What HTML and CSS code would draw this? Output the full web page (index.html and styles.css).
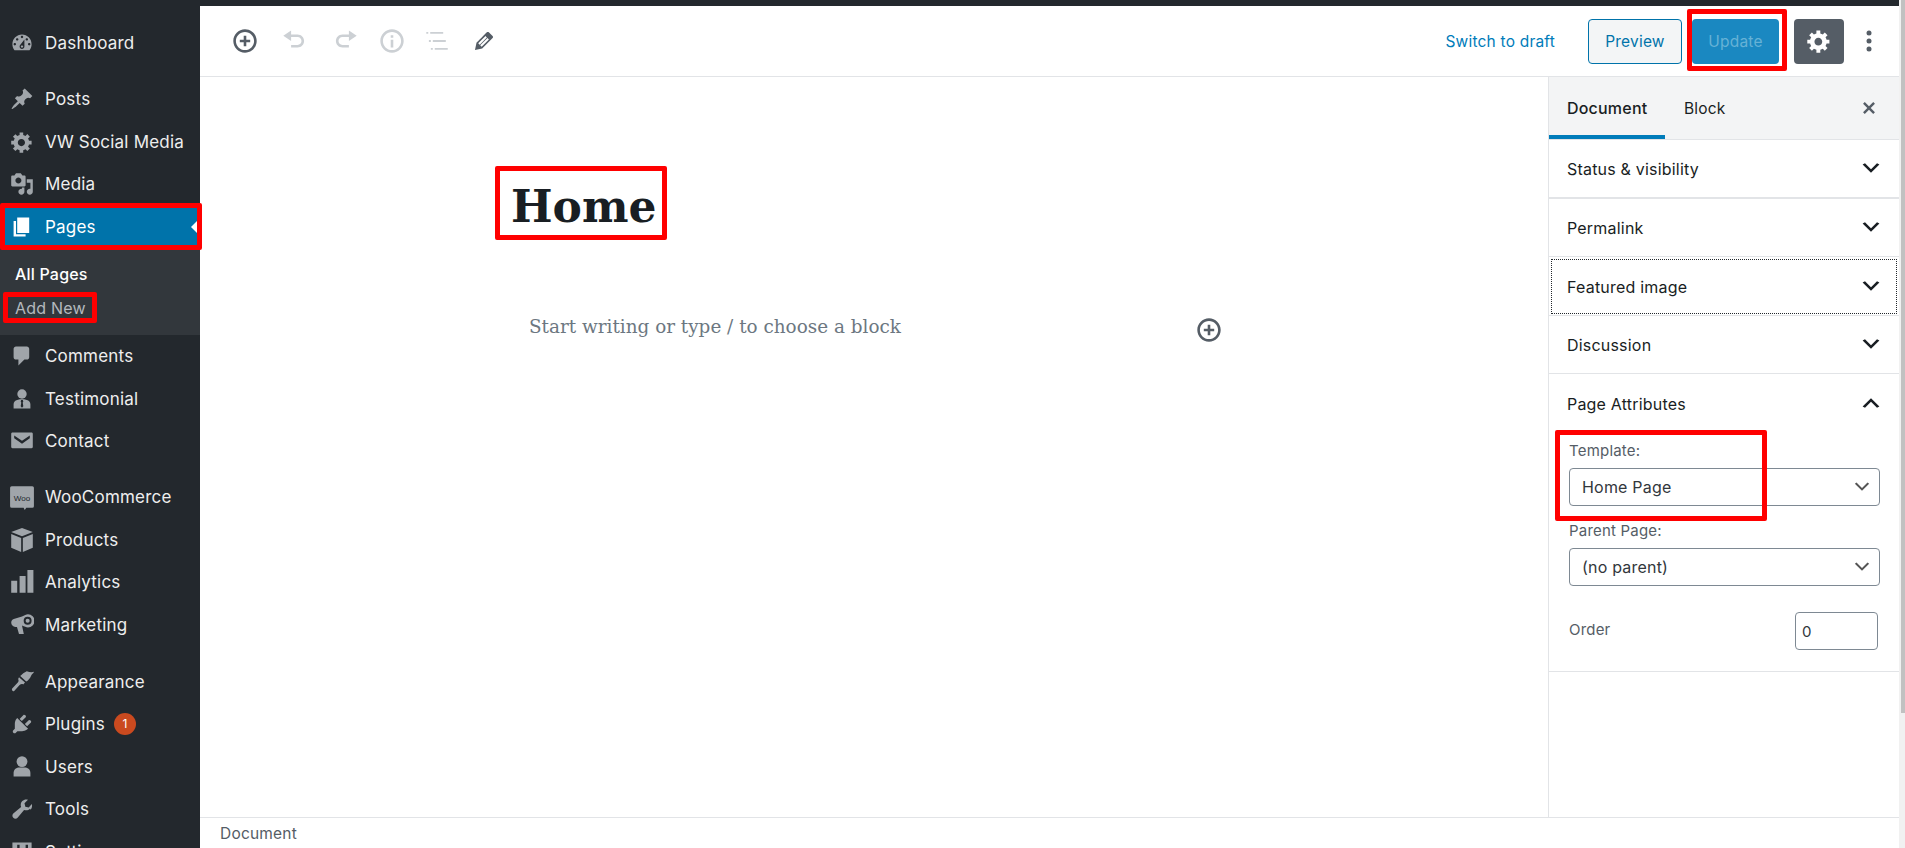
FILE: index.html
```html
<!DOCTYPE html>
<html lang="en">
<head>
    <meta charset="UTF-8">
    <title>Edit Page</title>
    <link rel="stylesheet" href="styles.css">
</head>
<body>
    <div class="admin">
        <nav class="sidebar">
            <a class="menu-item"><svg class="menu-icon" viewBox="0 0 20 20"><path d="M3.76 16h12.48c1.1-1.37 1.76-3.11 1.76-5 0-4.42-3.58-8-8-8s-8 3.58-8 8c0 1.89.66 3.63 1.76 5zM10 4c.55 0 1 .45 1 1s-.45 1-1 1-1-.45-1-1 .45-1 1-1zM6 6c.55 0 1 .45 1 1s-.45 1-1 1-1-.45-1-1 .45-1 1-1zm8 0c.55 0 1 .45 1 1s-.45 1-1 1-1-.45-1-1 .45-1 1-1zm-5.37 5.55L12 7v6c0 1.1-.9 2-2 2s-2-.9-2-2c0-.57.24-1.08.63-1.45zM4 10c.55 0 1 .45 1 1s-.45 1-1 1-1-.45-1-1 .45-1 1-1zm12 0c.55 0 1 .45 1 1s-.45 1-1 1-1-.45-1-1 .45-1 1-1zm-5 3c0-.55-.45-1-1-1s-1 .45-1 1 .45 1 1 1 1-.45 1-1z"/></svg>Dashboard</a>
            <div class="menu-sep"></div>
            <a class="menu-item"><svg class="menu-icon" viewBox="0 0 20 20"><path d="M10.44 3.02l1.82-1.82 6.36 6.35-1.83 1.82c-1.05-.68-2.48-.57-3.41.36l-.75.75c-.92.93-1.04 2.35-.35 3.41l-1.83 1.82-2.41-2.41-2.8 2.79c-.42.42-3.38 2.71-3.8 2.29s1.86-3.39 2.28-3.81l2.79-2.79L4.1 9.36l1.83-1.82c1.05.69 2.48.57 3.4-.36l.75-.75c.93-.92 1.05-2.35.36-3.41z"/></svg>Posts</a>
            <a class="menu-item"><svg class="menu-icon" viewBox="0 0 20 20"><path d="M18 12h-2.18c-.17.7-.44 1.35-.81 1.93l1.54 1.54-2.1 2.1-1.54-1.54c-.58.36-1.23.63-1.91.79V19H8v-2.18c-.68-.16-1.33-.43-1.91-.79l-1.54 1.54-2.12-2.12 1.54-1.54c-.36-.58-.63-1.23-.79-1.91H1V9.03h2.17c.16-.7.44-1.35.8-1.94L2.43 5.55l2.1-2.1 1.54 1.54c.58-.37 1.24-.64 1.93-.81V2h3v2.18c.68.16 1.33.43 1.91.79l1.54-1.54 2.12 2.12-1.54 1.54c.36.59.64 1.24.8 1.94H18V12zm-8.5 1.5c1.66 0 3-1.34 3-3s-1.34-3-3-3-3 1.34-3 3 1.34 3 3 3z"/></svg>VW Social Media</a>
            <a class="menu-item"><svg class="menu-icon" viewBox="0 0 20 20"><path d="M13 11V4c0-.55-.45-1-1-1h-1.67L9 1H5L3.67 3H2c-.55 0-1 .45-1 1v7c0 .55.45 1 1 1h10c.55 0 1-.45 1-1zM7 4.5c1.38 0 2.5 1.12 2.5 2.5S8.38 9.5 7 9.5 4.5 8.38 4.5 7 5.62 4.5 7 4.5zM14 6h5v10.5c0 1.38-1.12 2.5-2.5 2.5S14 17.88 14 16.5s1.12-2.5 2.5-2.5c.17 0 .34.02.5.05V9h-3V6zm-4 8.05V13h2v3.5c0 1.38-1.12 2.5-2.5 2.5S7 17.88 7 16.5 8.12 14 9.5 14c.17 0 .34.02.5.05z"/></svg>Media</a>
            <a class="menu-item current"><svg class="menu-icon" viewBox="0 0 20 20"><path d="M6 15V2h10v13H6zm-1 1h8v2H3V5h2v11z"/></svg>Pages</a>
            <div class="submenu">
                <a class="sub-item active">All Pages</a>
                <a class="sub-item">Add New</a>
            </div>
            <a class="menu-item"><svg class="menu-icon" viewBox="0 0 20 20"><path d="M5 2h9c1.1 0 2 .9 2 2v7c0 1.1-.9 2-2 2h-2l-5 5v-5H5c-1.1 0-2-.9-2-2V4c0-1.1.9-2 2-2z"/></svg>Comments</a>
            <a class="menu-item"><svg class="menu-icon" viewBox="0 0 20 20"><circle cx="10" cy="5.8" r="3.9"/><path d="M3 18v-3.6c0-2 1.3-3.2 3-3.6l2.2-.6h3.6l2.2.6c1.7.4 3 1.6 3 3.6V18z"/><path class="cut" d="M9.3 10.8h1.4l.4 1.2-.5 1 .5 3-1.1 1.2L8.900 16l.5-3-.5-1z"/></svg>Testimonial</a>
            <a class="menu-item"><svg class="menu-icon" viewBox="0 0 20 20"><path d="M2 3h16c.5 0 1 .5 1 1v11c0 .5-.5 1-1 1H2c-.5 0-1-.5-1-1V4c0-.5.5-1 1-1z"/><path class="cut" d="M3.500 5.500L10 9.800l6.500-4.300v2.300L10 12.200 3.500 7.800z"/></svg>Contact</a>
            <div class="menu-sep"></div>
            <a class="menu-item"><svg class="menu-icon icon-wide" viewBox="0 0 24 24"><path d="M2.500 2h19A1.500 1.500 0 0 1 23 3.500v17a1.500 1.500 0 0 1-1.500 1.500H16l-1.500 2-1-2H2.500A1.500 1.500 0 0 1 1 20.500v-17A1.500 1.500 0 0 1 2.500 2z"/><text class="woo-text" x="12" y="15.500" text-anchor="middle">Woo</text></svg>WooCommerce</a>
            <a class="menu-item"><svg class="menu-icon" viewBox="0 0 20 20"><path d="M10 0l9 3.300L10 6.900 1 3.300zM1 5l8.300 3.300V20L1 16.500zM19 5v11.500L10.700 20V8.300z"/></svg>Products</a>
            <a class="menu-item"><svg class="menu-icon" viewBox="0 0 20 20"><path d="M1 9h5v10H1zM8 5h5v14H8zM14.500 0H19.500v19h-5z"/></svg>Analytics</a>
            <a class="menu-item"><svg class="menu-icon" viewBox="0 0 20 20"><path d="M15 1a5.500 5.500 0 0 1 0 11c-1.500 0-3-.8-5-1.500l1.500 7H7.500L5.800 11.700H4.500C2.500 11.700 1 10 1 8s1.500-3.200 3.500-3.500L10 3c2-.8 3.500-2 5-2zm-.300 2.200a3.300 3.300 0 0 0 0 6.600 3.300 3.300 0 0 0 0-6.600zm0 1.600a1.700 1.700 0 1 1 0 3.400 1.700 1.700 0 0 1 0-3.400z"/></svg>Marketing</a>
            <div class="menu-sep wide"></div>
            <a class="menu-item"><svg class="menu-icon" viewBox="0 0 20 20"><path d="M14 1c2.500 1 4.500 1 6 .5-.5 1.500-2 2-2.500 3.500-.7 2-2.500 4-4 4.500L8.500 5C10 3.500 12 1.800 14 1zM7.500 6l5 4.500-1.500 1.500c-1-.5-2-.3-3 .5L3.500 17.500c-1 .8-2.500-.7-1.700-2l4.700-5c.8-1 .8-2 .3-3z"/></svg>Appearance</a>
            <a class="menu-item"><svg class="menu-icon" viewBox="0 0 20 20"><path d="M13.110 4.360L9.870 7.600 8 5.730l3.240-3.240c.35-.34 1.050-.2 1.560.32.520.51.660 1.210.310 1.550zm-8 1.770l.91-1.120 9.010 9.010-1.190.840c-.710.710-2.630 1.160-3.820 1.160H6.140L4.900 17.260c-.590.590-1.540.590-2.120 0-.590-.580-.590-1.530 0-2.120l1.240-1.240v-3.880c0-1.130.4-3.190 1.090-3.890zm7.260 3.970l3.240-3.240c.340-.350 1.040-.210 1.550.31.520.51.660 1.210.310 1.550l-3.240 3.250z"/></svg>Plugins<span class="badge">1</span></a>
            <a class="menu-item"><svg class="menu-icon" viewBox="0 0 20 20"><circle cx="10" cy="5.500" r="4.500"/><path d="M3 18v-3c0-3 2.500-4.500 5-4.500h4c2.500 0 5 1.500 5 4.500v3z"/></svg>Users</a>
            <a class="menu-item"><svg class="menu-icon" viewBox="0 0 20 20"><path d="M16.680 9.770c-1.340 1.340-3.300 1.670-4.950.990l-5.410 6.520c-.990.990-2.590.990-3.580 0s-.990-2.590 0-3.570l6.520-5.420c-.680-1.650-.350-3.610.990-4.950 1.280-1.280 3.120-1.620 4.710-1.050L12.080 5.170l.7 2.860 2.860.7 2.500-2.880c.570 1.590.230 3.430-1.050 4.710z"/></svg>Tools</a>
            <a class="menu-item"><svg class="menu-icon" viewBox="0 0 20 20"><path d="M2 2h16v16H2zM6 4v3H4.500v2H6v7h2V9h1.500V7H8V4zM13 4v7h-1.500v2H13v3h2v-3h1.500v-2H15V4z"/></svg>Settings</a>
        </nav>
        <div class="main">
            <div class="top-strip"></div>
            <header class="toolbar">
                <div class="tools">
                    <svg class="tool dark spaced" viewBox="0 0 20 20"><path d="M10 1c-5 0-9 4-9 9s4 9 9 9 9-4 9-9-4-9-9-9zm0 16c-3.900 0-7-3.100-7-7s3.100-7 7-7 7 3.100 7 7-3.100 7-7 7zm1-11H9v3H6v2h3v3h2v-3h3V9h-3V6z"/></svg>
                    <svg class="tool spaced" viewBox="0 0 20 20"><path d="M12 5H7V2L1 6l6 4V7h5c1.660 0 3 1.340 3 3s-1.340 3-3 3H7v2h5c2.760 0 5-2.240 5-5s-2.240-5-5-5z"/></svg>
                    <svg class="tool nudge" viewBox="0 0 20 20"><path d="M8 5h5V2l6 4-6 4V7H8c-1.660 0-3 1.340-3 3s1.340 3 3 3h5v2H8c-2.760 0-5-2.240-5-5s2.240-5 5-5z"/></svg>
                    <svg class="tool" viewBox="0 0 20 20"><path d="M10 1c-5 0-9 4-9 9s4 9 9 9 9-4 9-9-4-9-9-9zm0 16c-3.900 0-7-3.100-7-7s3.100-7 7-7 7 3.100 7 7-3.100 7-7 7zM9 9h2v6H9zM9 5.500h2v2H9z"/></svg>
                    <svg class="tool" viewBox="0 0 20 20"><path d="M1 3h1.500v1.500H1zM4 3h10v1.500H4zM3 9.200h1.500v1.500H3zM6 9.200h10v1.500H6zM4.500 15.300H6v1.500H4.500zM7.500 15.300h10v1.500h-10z"/></svg>
                    <svg class="tool dark" viewBox="0 0 20 20"><path d="M13.890 3.390l2.710 2.720c.460.460.420 1.240.030 1.640l-8.010 8.020-5.560 1.160 1.160-5.580s7.600-7.630 7.990-8.030c.390-.390 1.220-.390 1.680.07zm-2.730 2.790l-5.590 5.610 1.110 1.110 5.540-5.650zm-2.970 8.230l5.580-5.600-1.070-1.080-5.590 5.600z"/></svg>
                </div>
                <div class="actions">
                    <a class="draft-link">Switch to draft</a>
                    <button class="btn btn-preview">Preview</button>
                    <button class="btn btn-update">Update</button>
                    <button class="btn btn-gear"><svg viewBox="0 0 20 20"><path d="M18 12h-2.180c-.170.700-.440 1.350-.810 1.930l1.540 1.540-2.100 2.100-1.540-1.540c-.580.360-1.230.630-1.910.790V19H8v-2.180c-.680-.160-1.330-.430-1.910-.790l-1.540 1.540-2.120-2.120 1.540-1.540c-.360-.580-.630-1.230-.790-1.910H1V9.030h2.170c.160-.700.440-1.350.800-1.940L2.430 5.550l2.100-2.100 1.540 1.540c.580-.370 1.240-.640 1.930-.810V2h3v2.180c.680.160 1.330.430 1.910.790l1.540-1.540 2.120 2.120-1.540 1.540c.360.590.640 1.240.800 1.940H18V12zm-8.500 1.500c1.660 0 3-1.340 3-3s-1.340-3-3-3-3 1.340-3 3 1.340 3 3 3z"/></svg></button>
                    <svg class="kebab" viewBox="0 0 6 24"><circle cx="3" cy="4" r="2.500"/><circle cx="3" cy="12" r="2.500"/><circle cx="3" cy="20" r="2.500"/></svg>
                </div>
            </header>
            <div class="workspace">
                <section class="editor">
                    <div class="title-wrap">
                        <h1 class="post-title">Home</h1>
                    </div>
                    <div class="block-row">
                        <p class="placeholder">Start writing or type / to choose a block</p>
                        <svg class="inline-add" viewBox="0 0 20 20"><path d="M10 1c-5 0-9 4-9 9s4 9 9 9 9-4 9-9-4-9-9-9zm0 16c-3.900 0-7-3.100-7-7s3.100-7 7-7 7 3.100 7 7-3.100 7-7 7zm1-11H9v3H6v2h3v3h2v-3h3V9h-3V6z"/></svg>
                    </div>
                </section>
                <aside class="panel">
                    <div class="panel-tabs">
                        <span class="tab active">Document</span>
                        <span class="tab">Block</span>
                        <svg class="panel-close" viewBox="0 0 20 20"><path d="M14.950 6.460L11.410 10l3.540 3.540-1.410 1.410L10 11.420l-3.530 3.530-1.420-1.420L8.580 10 5.050 6.470l1.420-1.420L10 8.580l3.540-3.530z"/></svg>
                    </div>
                    <div class="section thick"><span>Status &amp; visibility</span><svg class="chev" viewBox="0 0 20 20"><path d="M5 6l5 5 5-5 2 1-7 7-7-7z"/></svg></div>
                    <div class="section"><span>Permalink</span><svg class="chev" viewBox="0 0 20 20"><path d="M5 6l5 5 5-5 2 1-7 7-7-7z"/></svg></div>
                    <div class="section focused"><span>Featured image</span><svg class="chev" viewBox="0 0 20 20"><path d="M5 6l5 5 5-5 2 1-7 7-7-7z"/></svg></div>
                    <div class="section"><span>Discussion</span><svg class="chev" viewBox="0 0 20 20"><path d="M5 6l5 5 5-5 2 1-7 7-7-7z"/></svg></div>
                    <div class="section open"><span>Page Attributes</span><svg class="chev up" viewBox="0 0 20 20"><path d="M5 6l5 5 5-5 2 1-7 7-7-7z"/></svg></div>
                    <div class="attributes">
                        <label class="field-label">Template:</label>
                        <div class="select-box">Home Page<svg viewBox="0 0 20 20"><path d="M5 6l5 5 5-5 1.500 1L10 13.500 3.500 7z"/></svg></div>
                        <label class="field-label">Parent Page:</label>
                        <div class="select-box">(no parent)<svg viewBox="0 0 20 20"><path d="M5 6l5 5 5-5 1.500 1L10 13.500 3.500 7z"/></svg></div>
                        <div class="order-row">
                            <label class="order-label">Order</label>
                            <div class="order-input">0</div>
                        </div>
                    </div>
                </aside>
            </div>
            <footer class="statusbar">Document</footer>
        </div>
        <div class="scrollbar"><div class="scroll-thumb"></div></div>
    </div>
    <!-- red marks drawn over the screenshot -->
    <div class="mark mark-pages"></div>
    <div class="mark mark-addnew"></div>
    <div class="mark mark-update"></div>
    <div class="mark mark-title"></div>
    <div class="mark mark-template"></div>
</body>
</html>
```

FILE: styles.css
```css
* {
    margin: 0;
    padding: 0;
    box-sizing: border-box;
}
html, body {
    height: 848px;
    overflow: hidden;
}
body {
    position: relative;
    font-family: Inter, Lato, sans-serif;
    font-size: 17px;
    letter-spacing: 0.2px;
    color: #191e23;
    background-color: #fff;
}
.admin {
    display: flex;
    height: 848px;
}

/* Left menu */
.sidebar {
    width: 200px;
    flex-shrink: 0;
    height: 848px;
    overflow: hidden;
    padding-top: 22px;
    background-color: #23282d;
}
.menu-item {
    display: flex;
    align-items: center;
    height: 42.5px;
    color: #eee;
    position: relative;
}
.menu-icon {
    width: 24px;
    height: 24px;
    margin: 0 11px 0 10px;
    fill: #a0a5aa;
    flex-shrink: 0;
}
.icon-wide {
    width: 26px;
    height: 26px;
    margin: 0 10px 0 9px;
}
.cut {
    fill: #23282d;
}
.woo-text {
    font-family: "Liberation Sans", sans-serif;
    font-size: 7.5px;
    letter-spacing: 0;
    fill: #23282d;
}
.menu-sep {
    height: 13.5px;
}
.menu-sep.wide {
    height: 14.5px;
}
.menu-item.current {
    color: #fff;
    background-color: #0073aa;
}
.menu-item.current .menu-icon {
    fill: #fff;
}
.menu-item.current::after {
    content: "";
    position: absolute;
    right: 0;
    top: 50%;
    margin-top: -9px;
    border: 9px solid transparent;
    border-right-color: #fff;
    border-left-width: 0;
}
.submenu {
    display: flex;
    flex-direction: column;
    height: 87px;
    padding: 9px 0 0 15px;
    background-color: #32373c;
}
.sub-item {
    height: 34px;
    line-height: 34px;
    color: #b4b9be;
    font-size: 16px;
}
.sub-item.active {
    color: #fff;
    font-weight: 500;
}
.badge {
    width: 22px;
    height: 22px;
    line-height: 22px;
    margin-left: 9px;
    text-align: center;
    border-radius: 50%;
    font-size: 12px;
    letter-spacing: 0;
    color: #fff;
    background-color: #ca4a1f;
}

/* Main column */
.main {
    flex: 1;
    display: flex;
    flex-direction: column;
    min-width: 0;
}
.top-strip {
    height: 6px;
    background-color: #23282d;
}
.toolbar {
    display: flex;
    align-items: center;
    justify-content: space-between;
    height: 71px;
    padding: 0 27px 0 32px;
    border-bottom: 1px solid #e2e4e7;
}
.tools {
    display: flex;
    align-items: center;
    gap: 20px;
}
.tool {
    width: 26px;
    height: 26px;
    fill: #ccd0d4;
}
.tool.spaced {
    margin-right: 4px;
}
.tool.nudge {
    margin-right: 1px;
}
.tool.dark {
    fill: #555d66;
}
.actions {
    display: flex;
    align-items: center;
}
.draft-link {
    margin-right: 33px;
    color: #007cba;
    font-size: 15.5px;
}
.btn {
    height: 45px;
    font: inherit;
    font-size: 15.5px;
    letter-spacing: 0.2px;
    border-radius: 4px;
    cursor: pointer;
}
.btn-preview {
    width: 94px;
    color: #0073aa;
    background-color: #f3f5f6;
    border: 1px solid #0073aa;
}
.btn-update {
    width: 87px;
    margin-left: 10px;
    color: #66b2d6;
    background-color: #1a88c1;
    border: none;
}
.btn-gear {
    display: flex;
    align-items: center;
    justify-content: center;
    width: 50px;
    margin-left: 15px;
    background-color: #555d66;
    border: none;
}
.btn-gear svg {
    width: 26px;
    height: 26px;
    fill: #fff;
}
.kebab {
    width: 6px;
    height: 24px;
    margin-left: 22px;
    fill: #555d66;
}

/* Editor and side panel */
.workspace {
    flex: 1;
    display: flex;
    min-height: 0;
}
.editor {
    flex: 1;
    min-width: 0;
    padding-left: 311px;
    font-family: "DejaVu Serif", serif;
    letter-spacing: 0;
}
.title-wrap {
    padding-top: 104px;
}
.post-title {
    font-size: 44px;
    line-height: 52px;
    font-weight: 700;
    color: #191e23;
}
.block-row {
    display: flex;
    align-items: center;
    justify-content: space-between;
    width: 711px;
    margin-top: 76px;
    padding-left: 18px;
}
.placeholder {
    font-size: 18.4px;
    color: #6c7781;
}
.inline-add {
    width: 26px;
    height: 26px;
    margin-top: 8px;
    fill: #555d66;
}
.panel {
    width: 351px;
    flex-shrink: 0;
    border-left: 1px solid #e2e4e7;
}
.panel-tabs {
    display: flex;
    align-items: center;
    height: 63px;
    background-color: #f3f4f5;
    border-bottom: 1px solid #e2e4e7;
}
.tab {
    display: flex;
    align-items: center;
    height: 62px;
    padding: 0 19px;
    font-size: 15.5px;
    color: #191e23;
}
.tab.active {
    width: 116px;
    padding: 4px 0 0 18px;
    font-size: 16px;
    font-weight: 500;
    border-bottom: 4px solid #007cba;
}
.panel-close {
    width: 24px;
    height: 24px;
    margin-left: auto;
    margin-right: 18px;
    fill: #555d66;
}
.section {
    display: flex;
    align-items: center;
    justify-content: space-between;
    height: 58.5px;
    padding: 0 16px 0 18px;
    border-bottom: 1px solid #e2e4e7;
    font-size: 16px;
}
.section span {
    padding-top: 2px;
}
.section.thick {
    border-bottom-width: 2px;
}
.section.focused {
    outline: 1px dotted #23282d;
    outline-offset: -3px;
}
.section.open {
    border-bottom: none;
}
.chev {
    width: 24px;
    height: 24px;
    fill: #191e23;
}
.chev.up {
    transform: rotate(180deg);
}
.attributes {
    padding: 2.5px 19px 21px 20px;
    border-bottom: 1px solid #e2e4e7;
    color: #555d66;
}
.field-label {
    display: block;
    height: 32.5px;
    line-height: 32px;
    font-size: 15px;
}
.select-box {
    display: flex;
    align-items: center;
    justify-content: space-between;
    height: 38px;
    margin-bottom: 9.5px;
    padding: 0 6px 0 12px;
    border: 1px solid #7e8993;
    border-radius: 4px;
    font-size: 16px;
    color: #32373c;
}
.select-box svg {
    width: 22px;
    height: 22px;
    fill: #555;
}
.order-row {
    display: flex;
    align-items: center;
    justify-content: space-between;
    margin-top: 26px;
    padding-right: 2px;
}
.order-label {
    font-size: 15px;
    margin-top: -3px;
}
.order-input {
    width: 83px;
    height: 38px;
    line-height: 38px;
    padding-left: 6px;
    border: 1px solid #7e8993;
    border-radius: 4px;
    font-size: 15px;
    color: #32373c;
}
.statusbar {
    height: 31px;
    line-height: 31px;
    padding-left: 20px;
    border-top: 1px solid #e2e4e7;
    font-size: 15.5px;
    color: #555d66;
}
.scrollbar {
    width: 6px;
    flex-shrink: 0;
    padding-left: 2px;
    background-color: #f1f1f1;
}
.scroll-thumb {
    height: 713px;
    background-color: #c1c1c1;
}

/* red annotation boxes */
.mark {
    position: absolute;
    border: 5px solid #f00;
    border-radius: 2px;
}
.mark-pages {
    left: 0;
    top: 203px;
    width: 202px;
    height: 47px;
}
.mark-addnew {
    left: 3px;
    top: 292px;
    width: 94px;
    height: 31px;
}
.mark-update {
    left: 1687px;
    top: 9px;
    width: 100px;
    height: 62px;
}
.mark-title {
    left: 495px;
    top: 166px;
    width: 172px;
    height: 74px;
}
.mark-template {
    left: 1555px;
    top: 430px;
    width: 212px;
    height: 91px;
}
```
